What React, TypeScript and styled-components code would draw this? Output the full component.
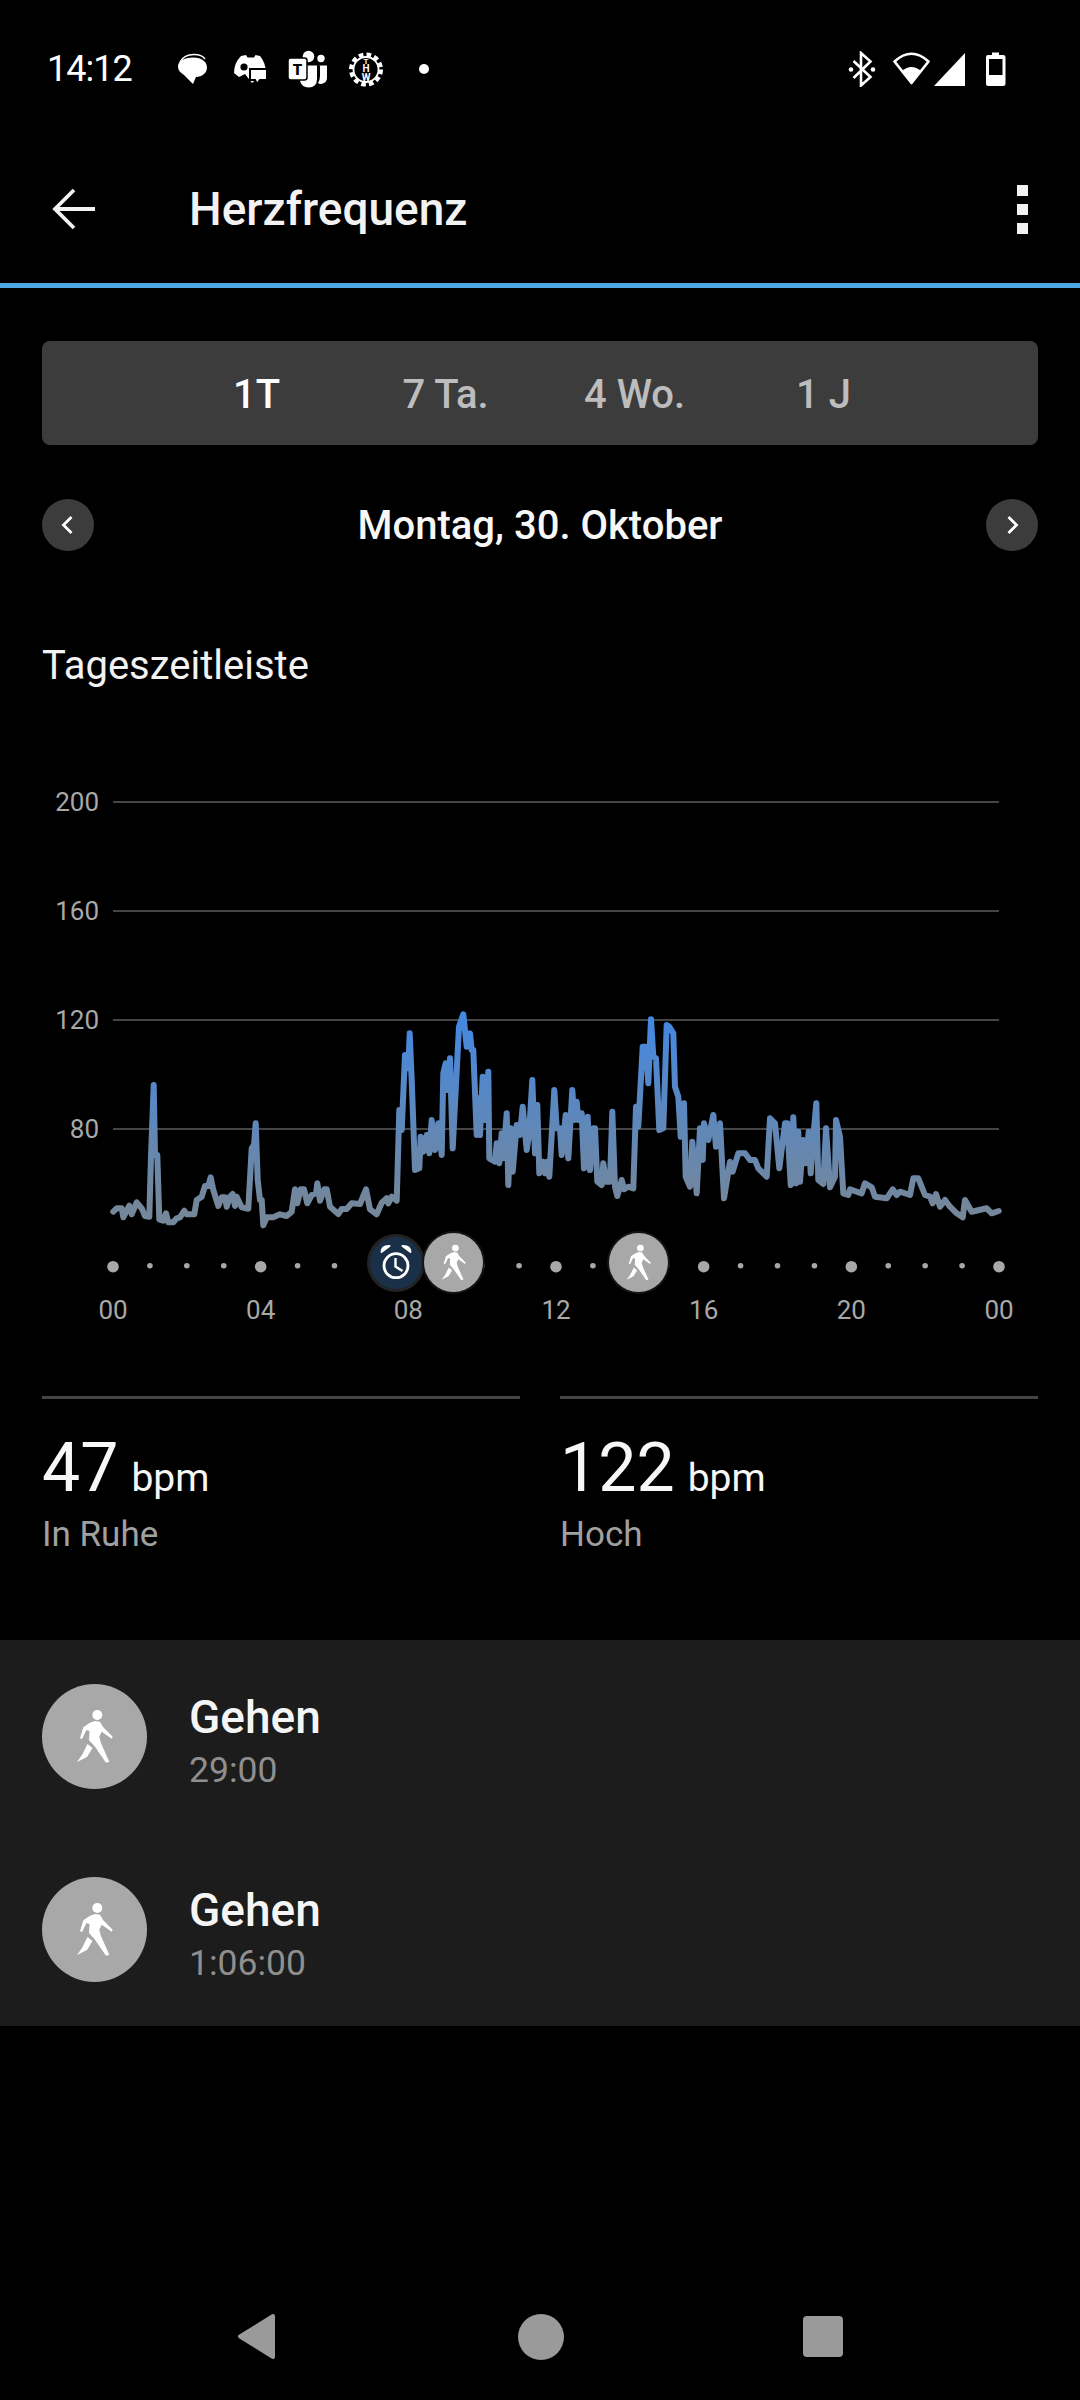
import React from 'react'
import styled, { createGlobalStyle } from 'styled-components'

const GlobalStyle = createGlobalStyle`
  html, body {
    margin: 0;
    padding: 0;
    background: #000;
    font-family: Roboto, "Noto Sans", sans-serif;
  }
`

// trace read off the picture in two runs, values are 3x pixels from each run's origin
const TRACE_LEFT = [
  100,695, 110,685, 125,685, 130,712, 148,677, 155,703, 170,667, 185,685, 195,708, 208,710, 213,530, 221,315, 225,525, 232,525,
  238,718, 250,722, 258,700, 265,727, 280,727, 290,715, 300,712, 313,692, 320,703, 343,703, 350,660, 365,650, 375,618, 385,618,
  392,592, 400,630, 415,678, 425,652, 435,652, 440,680, 450,650, 458,642, 465,678, 470,650, 485,682, 505,686, 515,505, 522,495,
  527,430, 533,600, 540,660, 545,660, 550,736, 560,712, 580,712, 600,703, 620,708, 635,695, 645,628, 652,670, 662,628, 672,628,
  682,670, 695,645, 708,640, 712,610, 720,662, 733,628, 740,628, 750,680, 775,702, 785,687, 800,687, 815,670, 840,672, 858,628,
  870,688, 890,703, 905,668, 920,655, 925,670, 935,650, 950,662, 958,390, 965,450, 975,225, 985,265, 989,160, 995,300, 1005,570,
  1018,565, 1022,470, 1030,515, 1040,465, 1048,520, 1055,420, 1065,510, 1075,430, 1085,525, 1090,280, 1097,250, 1102,330, 1110,235,
  1118,505, 1137,140, 1150,103, 1160,200, 1170,160, 1175,210, 1180,210, 1190,465, 1196,355, 1200,465, 1208,290, 1215,420, 1225,275,
  1228,535, 1245,545, 1250,490, 1258,550, 1265,460, 1270,535, 1280,400, 1285,615, 1292,445, 1298,575, 1310,435, 1320,465, 1328,380,
  1340,510, 1347,465, 1357,300, 1365,520, 1372,375, 1378,580,
]

const TRACE_RIGHT = [
  8,545, 15,580, 20,545, 28,590, 43,330, 50,445, 60,445, 65,525, 77,405, 85,535, 97,330, 103,420, 110,365, 115,420, 125,400, 132,565,
  143,410, 150,570, 160,445, 165,445, 172,605, 185,615, 190,550, 198,605, 210,605, 217,395, 225,620, 232,648, 245,600, 252,628,
  265,620, 280,625, 288,380, 295,440, 308,200, 318,200, 325,310, 333,118, 340,230, 348,235, 358,450, 370,445, 380,135, 388,140,
  400,160, 405,320, 415,350, 422,470, 432,370, 437,590, 450,620, 457,485, 470,640, 480,445, 488,540, 492,430, 505,480, 520,405,
  528,500, 540,430, 552,655, 570,545, 578,575, 595,520, 615,520, 630,540, 645,540, 655,565, 680,590, 690,415, 705,430, 718,565,
  735,430, 742,430, 752,615, 760,412, 768,610, 775,455, 780,605, 790,480, 797,550, 806,455, 812,580, 818,490, 829,370, 835,600,
  850,612, 858,445, 870,622, 885,590, 888,420, 900,470, 910,640, 925,645, 930,628, 965,640, 975,610, 995,622, 1005,650, 1040,655,
  1058,628, 1070,645, 1080,635, 1110,645, 1120,595, 1135,595, 1155,645, 1170,650, 1178,670, 1188,642, 1200,680, 1215,660, 1230,680,
  1250,700, 1268,712, 1275,660, 1295,695, 1340,685, 1355,700, 1376,693,
]

function toPoints(run: number[], originX: number) {
  const out: string[] = []
  for (let i = 0; i < run.length; i += 2) {
    out.push(`${(originX + run[i] / 3).toFixed(1)},${(980 + run[i + 1] / 3).toFixed(1)}`)
  }
  return out
}

const TRACE = [...toPoints(TRACE_LEFT, 80), ...toPoints(TRACE_RIGHT, 540)].join(' ')

const GRID = [
  { y: 802, label: '200' },
  { y: 911, label: '160' },
  { y: 1020, label: '120' },
  { y: 1129, label: '80' },
]
const HOURS = ['00', '04', '08', '12', '16', '20', '00']
const DOT_START = 113
const DOT_STEP = 886 / 24

const tabs = ['1T', '7 Ta.', '4 Wo.', '1 J']

function WalkFigure() {
  return (
    <svg viewBox="0 0 105 105" width="100%" height="100%" fill="#fff">
      <circle cx="55.3" cy="31" r="5" />
      <path d="M53 37 L58 37.7 L61.3 43.3 L70.7 52.7 L69.7 54.7 L59.7 47.7 L57.3 52.7 L59 59.3 L67.3 77.7 L64 78.7 L53 62.7 L47 56 L47.5 47 L44.5 46 L40 55 L38 54.3 L41.3 43.3 L48 38.7 Z" />
      <path d="M45.5 60 L50.5 64 L45 73 L35 78 L40 71 Z" />
    </svg>
  )
}

function AlarmFigure() {
  return (
    <svg viewBox="4 4 52 52" width="100%" height="100%" fill="none">
      <circle cx="30" cy="32.7" r="12" stroke="#fff" strokeWidth="2.8" />
      <path d="M29.5 25 V33.5 L36.5 38" stroke="#fff" strokeWidth="2.4" />
      <path d="M15.5 19 Q16 12.5 23.5 13 Z" fill="#fff" stroke="#fff" strokeWidth="2" strokeLinejoin="round" />
      <path d="M44.5 19 Q44 12.5 36.5 13 Z" fill="#fff" stroke="#fff" strokeWidth="2" strokeLinejoin="round" />
    </svg>
  )
}

export default function App() {
  return (
    <Page>
      <GlobalStyle />
      <Header>
        <StatusBar>
          <Clock>14:12</Clock>
          <StatusIcon viewBox="171 54 30 32" width="30" height="32" $left={0}>
            <path d="M174 63 Q178 55.5 188 55.5 Q196 55.5 199 60" fill="none" stroke="#fff" strokeWidth="1.4" />
            <path d="M187 58.5 C196 58.5 201 63 201 68.5 C201 74 196 78 190 78 L187 85 L178 76 C174 73.5 172 71 172 67.5 C172 62 178 58.5 187 58.5 Z" fill="#fff" />
          </StatusIcon>
          <StatusIcon viewBox="226 56 34 30" width="34" height="30" $left={26}>
            <path d="M234 58 L239 57 L240.5 59.5 H247 L248.5 57 L253 58 Q258 64 259 73 L245 85 L238 76 L232 79 L227 75 Q227 65 234 58 Z" fill="#fff" />
            <circle cx="237" cy="69" r="3.6" fill="#000" />
            <path d="M243 71 H260 V82 H253 L250 86 L248 82 H243 Z" fill="#fff" stroke="#000" strokeWidth="2" />
          </StatusIcon>
          <StatusIcon viewBox="287 50 41 38" width="41" height="38" $left={20}>
            <circle cx="308.5" cy="56.5" r="5.8" fill="#fff" />
            <circle cx="321" cy="58.5" r="3.7" fill="#fff" />
            <path d="M319 65.5 H327 V78 Q327 83 321 84 Q318.5 84 318 83 Q320 80 320 76 V66 Z" fill="#fff" />
            <path d="M300 65.5 H317 V79 Q317 87.5 308.5 87.5 Q302 87.5 300 81 Z" fill="#fff" />
            <rect x="288" y="58" width="19" height="22" rx="2.5" fill="#fff" stroke="#000" strokeWidth="1.5" />
            <text x="297.5" y="75" textAnchor="middle" fontSize="15" fontWeight="900" fontFamily="Roboto, sans-serif" fill="#000">T</text>
          </StatusIcon>
          <StatusIcon viewBox="336 50 36 37" width="36" height="37" $left={20}>
            <circle cx="354" cy="68.5" r="14.5" fill="none" stroke="#fff" strokeWidth="5" strokeDasharray="4.5 3.1" />
            <circle cx="354" cy="68.5" r="12.5" fill="#000" stroke="#fff" strokeWidth="1.8" />
            <text x="354" y="71" textAnchor="middle" fontSize="10" fontWeight="700" fontFamily="Roboto, sans-serif" fill="#fff">H</text>
            <text x="354" y="79.5" textAnchor="middle" fontSize="10" fontWeight="700" fontFamily="Roboto, sans-serif" fill="#fff">W</text>
            <text x="354" y="63" textAnchor="middle" fontSize="8" fontWeight="700" fontFamily="Roboto, sans-serif" fill="#fff">T</text>
          </StatusIcon>
          <NotifDot />
          <StatusRight>
            <StatusIcon viewBox="838 50 28 36" width="28" height="36" $left={0}>
              <path d="M843.5 77 L860.5 60.5 L851 52 V84.5 L860.5 76 L843.5 60" fill="none" stroke="#fff" strokeWidth="2.6" />
              <circle cx="841" cy="68.5" r="2.3" fill="#fff" />
              <circle cx="863" cy="68.5" r="2.3" fill="#fff" />
            </StatusIcon>
            <StatusIcon viewBox="880 50 39 36" width="39" height="36" $left={16}>
              <path d="M899.5 82 L882.5 60.5 Q899.5 45 916.5 60.5 Z" fill="none" stroke="#fff" strokeWidth="2.6" strokeLinejoin="round" />
              <path d="M899.5 83 L890 70 Q899.5 62 909 70 Z" fill="#fff" />
            </StatusIcon>
            <StatusIcon viewBox="921 50 33 35" width="33" height="35" $left={2}>
              <path d="M922 84 L953 51 V84 Z" fill="#fff" />
            </StatusIcon>
            <StatusIcon viewBox="971 50 21 36" width="21" height="36" $left={19}>
              <path d="M978 51.5 H985 V54 H989 Q991.5 54 991.5 56 V83 Q991.5 85 989 85 H974 Q972 85 972 83 V56 Q972 54 974 54 H978 Z" fill="#fff" />
              <rect x="975" y="58" width="13.5" height="16" fill="#000" />
            </StatusIcon>
          </StatusRight>
        </StatusBar>
        <AppBar>
          <BackArrow viewBox="0 0 46 46" width="46" height="46">
            <path d="M45 23 H6 M24 4 L5 23 L24 42" fill="none" stroke="#f2f2f2" strokeWidth="3.8" />
          </BackArrow>
          <Title>Herzfrequenz</Title>
          <MoreMenu>
            <MoreDot />
            <MoreDot />
            <MoreDot />
          </MoreMenu>
        </AppBar>
      </Header>

      <TabBar>
        {tabs.map((t, i) => (
          <Tab key={t} $active={i === 0}>{t}</Tab>
        ))}
      </TabBar>

      <DateRow>
        <RoundButton>
          <svg viewBox="0 0 52 52" width="52" height="52"><path d="M29.5 18 L21.5 26 L29.5 34" fill="none" stroke="#fff" strokeWidth="2.8" /></svg>
        </RoundButton>
        <DateText>Montag, 30. Oktober</DateText>
        <RoundButton>
          <svg viewBox="0 0 52 52" width="52" height="52"><path d="M22.5 18 L30.5 26 L22.5 34" fill="none" stroke="#fff" strokeWidth="2.8" /></svg>
        </RoundButton>
      </DateRow>

      <SectionTitle>Tageszeitleiste</SectionTitle>

      <ChartWrap>
        <svg viewBox="0 760 1080 590" width="1080" height="590">
          <defs>
            <linearGradient id="traceFill" gradientUnits="userSpaceOnUse" x1="0" y1="1020" x2="0" y2="1205">
              <stop offset="0" stopColor="#4488e0" />
              <stop offset="1" stopColor="#74879b" />
            </linearGradient>
          </defs>
          {GRID.map(g => (
            <g key={g.label}>
              <line x1="113" x2="999" y1={g.y} y2={g.y} stroke="#454545" strokeWidth="2" />
              <AxisText x="99" y={g.y + 9} textAnchor="end">{g.label}</AxisText>
            </g>
          ))}
          <polyline points={TRACE} fill="none" stroke="url(#traceFill)" strokeWidth="6" strokeLinejoin="round" strokeLinecap="round" />
          {Array.from({ length: 25 }, (_, i) => (
            <circle
              key={i}
              cx={DOT_START + i * DOT_STEP}
              cy={i % 4 === 0 ? 1266.7 : 1265.7}
              r={i % 4 === 0 ? 5.8 : 2.8}
              fill="#a8a8a8"
            />
          ))}
          {HOURS.map((h, i) => (
            <AxisText key={i} x={DOT_START + i * 4 * DOT_STEP} y="1319" textAnchor="middle">{h}</AxisText>
          ))}
        </svg>
        <AlarmBadge>
          <AlarmFigure />
        </AlarmBadge>
        <WalkBadge $x={423.5}>
          <WalkFigure />
        </WalkBadge>
        <WalkBadge $x={609}>
          <WalkFigure />
        </WalkBadge>
      </ChartWrap>

      <Stats>
        <Stat>
          <StatValue>47<StatUnit>bpm</StatUnit></StatValue>
          <StatLabel>In Ruhe</StatLabel>
        </Stat>
        <Stat>
          <StatValue>122<StatUnit>bpm</StatUnit></StatValue>
          <StatLabel>Hoch</StatLabel>
        </Stat>
      </Stats>

      <ActivityList>
        <ActivityRow>
          <ActivityIcon><WalkFigure /></ActivityIcon>
          <ActivityText>
            <ActivityName>Gehen</ActivityName>
            <ActivityTime>29:00</ActivityTime>
          </ActivityText>
        </ActivityRow>
        <ActivityRow>
          <ActivityIcon><WalkFigure /></ActivityIcon>
          <ActivityText>
            <ActivityName>Gehen</ActivityName>
            <ActivityTime>1:06:00</ActivityTime>
          </ActivityText>
        </ActivityRow>
      </ActivityList>

      <NavBar>
        <svg viewBox="0 0 42 47" width="42" height="47">
          <path d="M37 3 L4 23.5 L37 44 Z" fill="#9a9a9a" stroke="#9a9a9a" strokeWidth="4" strokeLinejoin="round" />
        </svg>
        <NavCircle />
        <NavSquare />
      </NavBar>
    </Page>
  )
}

const Page = styled.div`
  width: 1080px;
  height: 2400px;
  background: #000;
  color: #f2f2f2;
  display: flex;
  flex-direction: column;
  overflow: hidden;
`
const Header = styled.header`
  height: 283px;
  border-bottom: 5px solid #4fa6e9;
`
const StatusBar = styled.div`
  height: 138px;
  padding: 0 74px 0 47px;
  display: flex;
  align-items: center;
`
const Clock = styled.div`
  width: 130px;
  font-size: 36px;
  letter-spacing: -1px;
  color: #fff;
`
const StatusIcon = styled.svg<{ $left: number }>`
  display: block;
  flex: none;
  margin-left: ${p => p.$left}px;
`
const NotifDot = styled.div`
  width: 10px;
  height: 10px;
  border-radius: 50%;
  background: #fff;
  margin-left: 35px;
`
const StatusRight = styled.div`
  margin-left: auto;
  display: flex;
  align-items: center;
`
const AppBar = styled.div`
  height: 142px;
  padding: 0 52px 0 50px;
  display: flex;
  align-items: center;
`
const BackArrow = styled.svg`
  display: block;
  flex: none;
`
const Title = styled.h1`
  margin: 0 0 0 93px;
  font-size: 46px;
  font-weight: 500;
  color: #f2f2f2;
`
const MoreMenu = styled.div`
  margin-left: auto;
  display: flex;
  flex-direction: column;
  gap: 8px;
`
const MoreDot = styled.div`
  width: 11px;
  height: 11px;
  background: #f2f2f2;
`
const TabBar = styled.div`
  margin: 53px 42px 0;
  height: 104px;
  box-sizing: border-box;
  padding-top: 2px;
  border-radius: 8px;
  background: #3c3c3c;
  display: flex;
  justify-content: center;
  align-items: center;
`
const Tab = styled.div<{ $active: boolean }>`
  width: 189px;
  text-align: center;
  font-size: 40px;
  font-weight: 500;
  color: ${p => (p.$active ? '#fff' : '#bdbdbd')};
`
const DateRow = styled.div`
  margin: 54px 42px 0;
  height: 52px;
  display: flex;
  justify-content: space-between;
  align-items: center;
`
const RoundButton = styled.div`
  width: 52px;
  height: 52px;
  border-radius: 50%;
  background: #3c3c3c;
`
const DateText = styled.div`
  font-size: 40px;
  font-weight: 500;
  color: #f7f7f7;
`
const SectionTitle = styled.h2`
  margin: 91px 42px 0;
  font-size: 40px;
  line-height: 48px;
  font-weight: 400;
  color: #f2f2f2;
`
const ChartWrap = styled.div`
  position: relative;
  height: 590px;
  margin-top: 70px;
  svg {
    display: block;
  }
`
const AxisText = styled.text`
  font-family: Roboto, sans-serif;
  font-size: 26px;
  fill: #a8a8a8;
`
const AlarmBadge = styled.div`
  position: absolute;
  left: 370px;
  top: 476.7px;
  width: 52px;
  height: 52px;
  border-radius: 50%;
  background: #1a3049;
  box-shadow: 0 0 0 3px #232323;
`
const WalkBadge = styled.div<{ $x: number }>`
  position: absolute;
  left: ${p => p.$x}px;
  top: 473px;
  width: 59px;
  height: 59px;
  border-radius: 50%;
  background: #a8a8a8;
  box-shadow: 0 0 0 2px #141414;
  svg {
    transform: scale(1.2);
  }
`
const Stats = styled.div`
  margin: 46px 42px 0;
  display: grid;
  grid-template-columns: 478px 478px;
  justify-content: space-between;
`
const Stat = styled.div`
  border-top: 3px solid #444;
  padding-top: 29px;
`
const StatValue = styled.div`
  font-size: 68px;
  line-height: 80px;
  color: #f7f7f7;
`
const StatUnit = styled.span`
  font-size: 39px;
  margin-left: 13px;
`
const StatLabel = styled.div`
  font-size: 35px;
  line-height: 44px;
  margin-top: -5px;
  color: #a0a0a0;
`
const ActivityList = styled.div`
  margin-top: 83px;
  background: #1c1c1c;
`
const ActivityRow = styled.div`
  height: 193px;
  padding: 0 42px;
  display: flex;
  align-items: center;
  gap: 42px;
`
const ActivityIcon = styled.div`
  width: 105px;
  height: 105px;
  border-radius: 50%;
  background: #a8a8a8;
  flex: none;
`
const ActivityText = styled.div`
  padding-top: 9px;
`
const ActivityName = styled.div`
  font-size: 46px;
  line-height: 54px;
  font-weight: 500;
  color: #f5f5f5;
`
const ActivityTime = styled.div`
  font-size: 35.5px;
  line-height: 46px;
  margin-top: 3px;
  color: #8f8f8f;
`
const NavBar = styled.nav`
  margin-top: auto;
  height: 120px;
  box-sizing: border-box;
  padding: 0 237px 7px 236px;
  display: flex;
  justify-content: space-between;
  align-items: center;
`
const NavCircle = styled.div`
  width: 46px;
  height: 46px;
  border-radius: 50%;
  background: #9a9a9a;
`
const NavSquare = styled.div`
  width: 40px;
  height: 41px;
  border-radius: 4px;
  background: #9a9a9a;
`
